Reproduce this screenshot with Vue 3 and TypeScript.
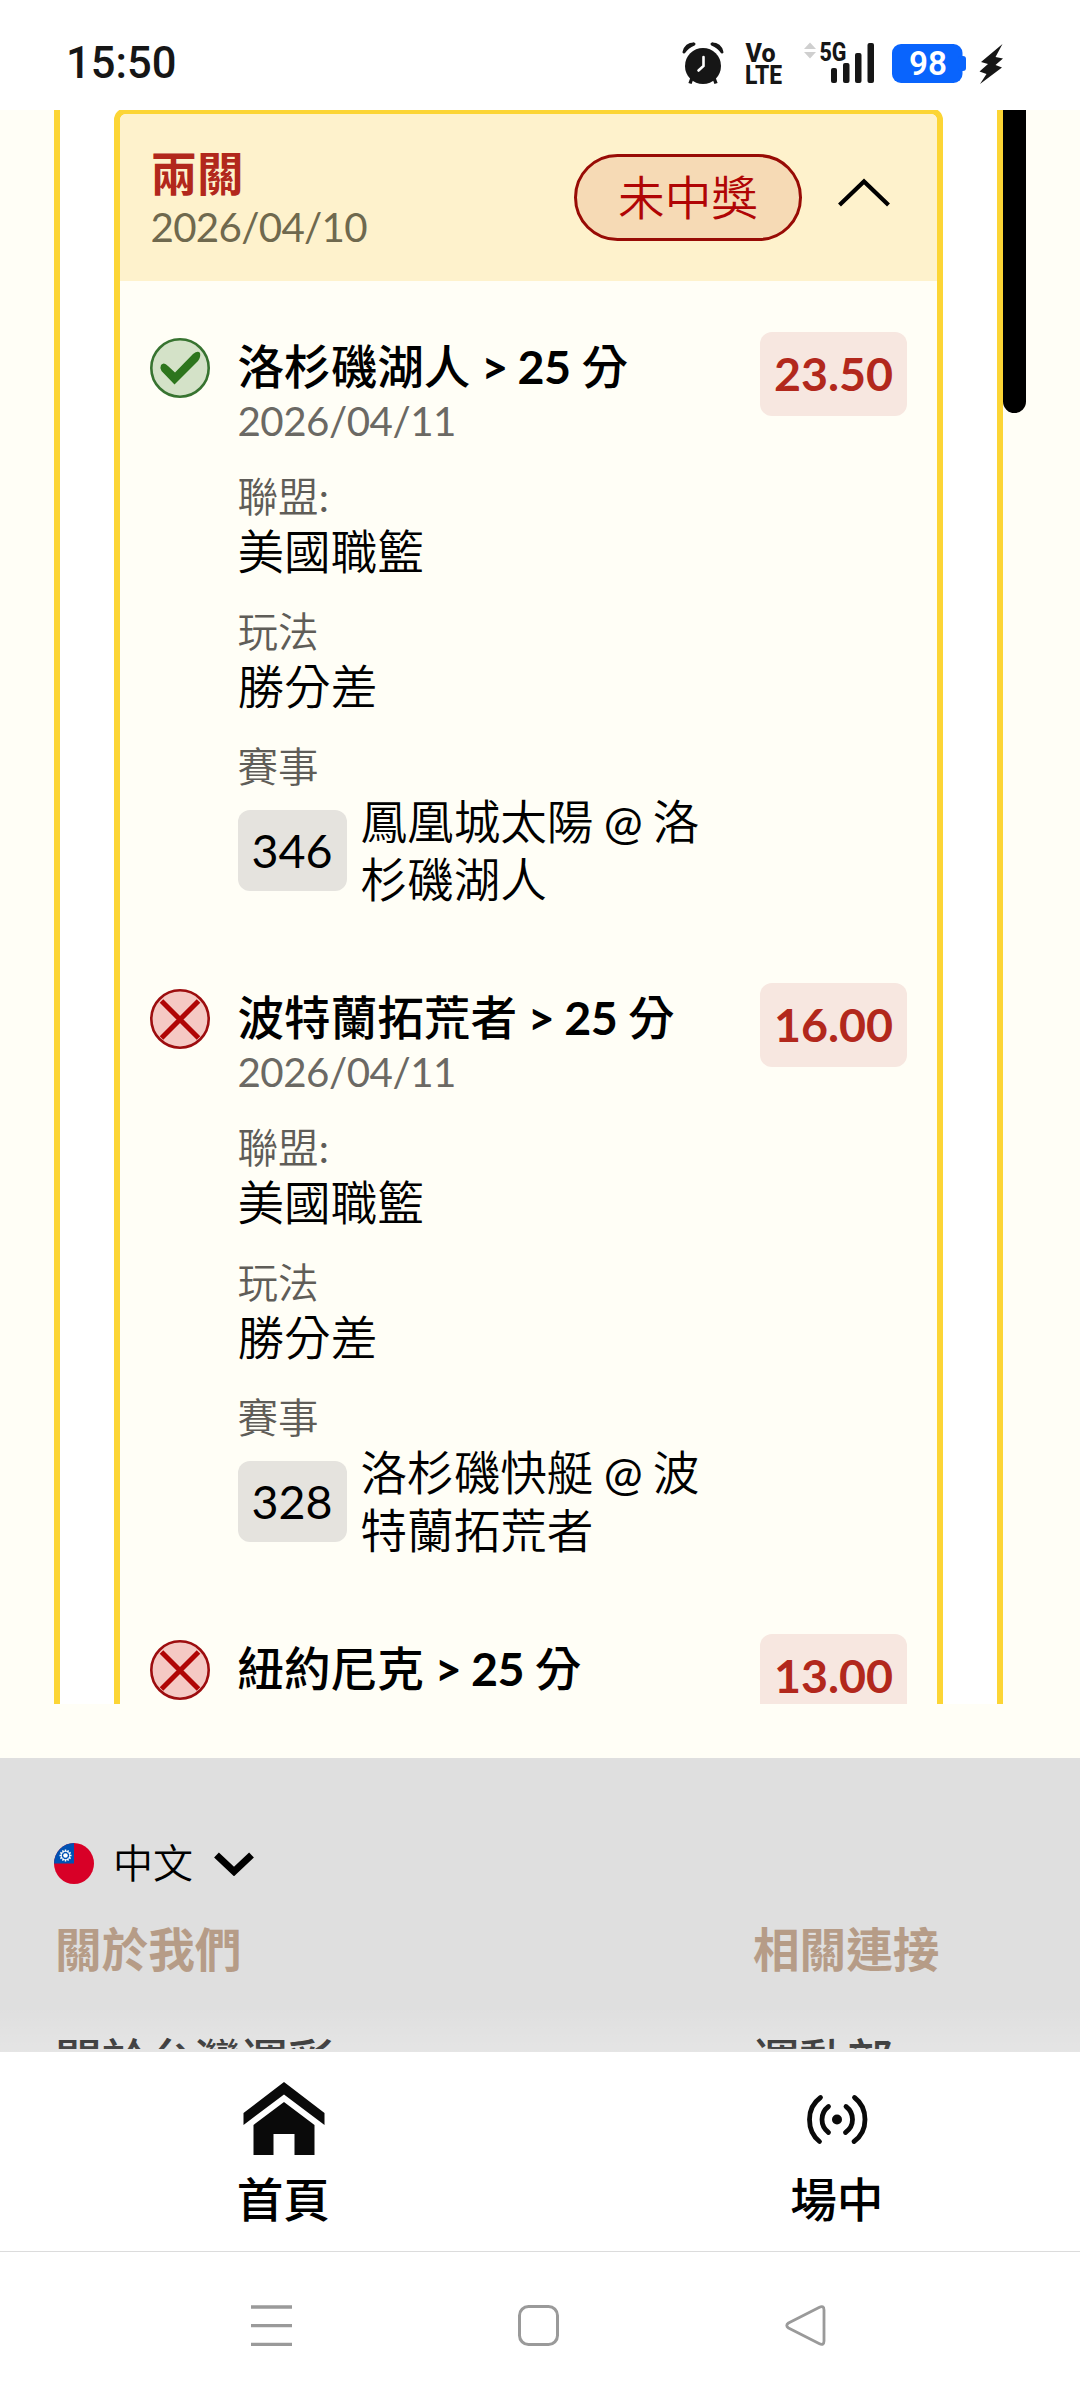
<script setup lang="ts">
interface Leg {
  won: boolean
  team: string
  margin: string
  date: string
  odds: string
  code: string
  away: string
  home: string
}

const legs: Leg[] = [
  { won: true, team: '洛杉磯湖人', margin: '> 25', date: '2026/04/11', odds: '23.50', code: '346', away: '鳳凰城太陽', home: '洛杉磯湖人' },
  { won: false, team: '波特蘭拓荒者', margin: '> 25', date: '2026/04/11', odds: '16.00', code: '328', away: '洛杉磯快艇', home: '波特蘭拓荒者' },
  { won: false, team: '紐約尼克', margin: '> 25', date: '', odds: '13.00', code: '', away: '', home: '' },
]

const sunRays: number[] = [0, 30, 60, 90, 120, 150, 180, 210, 240, 270, 300, 330]
</script>

<template>
  <div class="screen">
    <header class="status">
      <span class="clock">15:50</span>
      <svg class="status-icons" width="330" height="50" viewBox="680 40 330 50">
        <g fill="#161616">
          <circle cx="703" cy="66" r="18" />
          <path d="M684 52Q686 44 694 44Q687 47 684 52Z M722 52Q720 44 712 44Q719 47 722 52Z" stroke="#161616" stroke-width="3" stroke-linejoin="round" />
          <path d="M692 78L690 83.500M714 78L716 83.500" stroke="#161616" stroke-width="3.400" />
          <path d="M703.500 57V66L698.500 70.500" fill="none" stroke="#fff" stroke-width="2.600" stroke-linecap="round" />
          <text x="745.500" y="61.500" class="net" font-size="25" textLength="30" lengthAdjust="spacingAndGlyphs">Vo</text>
          <text x="745" y="83.500" class="net" font-size="25" textLength="37" lengthAdjust="spacingAndGlyphs">LTE</text>
          <text x="819.500" y="60.500" class="net" font-size="25" textLength="27" lengthAdjust="spacingAndGlyphs">5G</text>
          <rect x="831" y="68" width="6" height="15" rx="2" />
          <rect x="843" y="63" width="6.500" height="20" rx="2" />
          <rect x="855" y="53" width="6.500" height="30" rx="2" />
          <rect x="867.500" y="43" width="6.500" height="40" rx="2" />
          <path d="M1002.500 44L981 62L988 64L979.500 71.500L986.500 74L980 84L1002 67.500L995.500 65L1003 58.500L995.500 57Z" />
        </g>
        <path d="M804 49L810 42.500L816 49ZM804 52H816L810 58.500Z" fill="#cfcfcf" />
        <rect x="892" y="44" width="70.500" height="39" rx="9" fill="#0964fd" />
        <rect x="958" y="56" width="8" height="15" rx="3" fill="#0964fd" />
        <text x="909" y="75" font-family="Roboto, sans-serif" font-size="34" font-weight="600" fill="#fff" textLength="38" lengthAdjust="spacingAndGlyphs">98</text>
      </svg>
    </header>

    <main class="viewport">
      <div class="panel">
        <section class="ticket">
          <div class="ticket-head">
            <div class="head-text">
              <div class="combo">兩關</div>
              <div class="date olive">2026/04/10</div>
            </div>
            <span class="pill">未中獎</span>
            <svg class="chevron" width="52" height="30" viewBox="0 0 52 30">
              <path d="M1.500 27L26 3.500L50.500 27" fill="none" stroke="#000" stroke-width="4.200" />
            </svg>
          </div>

          <article v-for="leg in legs" :key="leg.team" class="leg">
            <svg class="mark" width="60" height="60" viewBox="0 0 60 60">
              <template v-if="leg.won">
                <circle cx="30" cy="30" r="28.700" fill="#d4e2c8" stroke="#377330" stroke-width="2.600" />
                <path d="M11 27Q14 23.500 18 28L25 34.500L43 16Q48 12 50 15Q51 19 48 23L24.500 46.500L11.500 33Q9.500 30 11 27Z" fill="#2d751d" />
              </template>
              <template v-else>
                <circle cx="30" cy="30" r="28.700" fill="#f5c9c4" stroke="#9d0d0f" stroke-width="2.600" />
                <path d="M11.500 12L48.500 49M48.500 12L11.500 49" stroke="#b00505" stroke-width="5" />
              </template>
            </svg>
            <div class="leg-body">
              <div class="leg-title">{{ leg.team }} <b>{{ leg.margin }}</b> 分</div>
              <template v-if="leg.code">
                <div class="date">{{ leg.date }}</div>
                <div class="label">聯盟<span class="latin">:</span></div>
                <div class="value">美國職籃</div>
                <div class="label">玩法</div>
                <div class="value">勝分差</div>
                <div class="label">賽事</div>
                <div class="match">
                  <span class="code">{{ leg.code }}</span>
                  <span class="teams">{{ leg.away }} <span class="latin">@</span> {{ leg.home }}</span>
                </div>
              </template>
            </div>
            <span class="odds">{{ leg.odds }}</span>
          </article>
        </section>
      </div>
      <div class="scrollbar"></div>
    </main>

    <footer class="footer">
      <div class="lang">
        <svg width="40" height="41" viewBox="0 0 40 41">
          <clipPath id="flag"><ellipse cx="20" cy="20.500" rx="20" ry="20.500" /></clipPath>
          <g clip-path="url(#flag)">
            <rect width="40" height="41" fill="#d80027" />
            <rect width="20" height="20.500" fill="#0052b4" />
            <g stroke="#fff" stroke-width="1.500">
              <line v-for="a in sunRays" :key="a" x1="11.500" y1="8.800" x2="11.500" y2="6.500" :transform="`rotate(${a} 11.500 12.500)`" />
            </g>
            <circle cx="11.500" cy="12.500" r="4.300" fill="none" stroke="#fff" stroke-width="0.800" />
            <circle cx="11.500" cy="12.500" r="2.300" fill="#fff" />
          </g>
        </svg>
        <span class="lang-name">中文</span>
        <svg width="40" height="24" viewBox="0 0 40 24">
          <path d="M2.500 3L20 19.500L37.500 3" fill="none" stroke="#000" stroke-width="7" />
        </svg>
      </div>
      <div class="columns">
        <div class="column">
          <div class="col-title">關於我們</div>
          <div class="col-link">關於台灣運彩</div>
        </div>
        <div class="column">
          <div class="col-title">相關連接</div>
          <div class="col-link">運動部</div>
        </div>
      </div>
      <div class="fade"></div>
    </footer>

    <nav class="tabs">
      <div class="tab">
        <svg width="82" height="80" viewBox="242.500 2080 82 80">
          <path d="M283.500 2082L324 2113V2125L283.500 2094.500L243 2125V2113Z" fill="#0a0a0a" />
          <path d="M283.500 2102L314 2125V2155H294V2134H273V2155H253V2125Z" fill="#0a0a0a" />
        </svg>
        <span>首頁</span>
      </div>
      <div class="tab">
        <svg width="82" height="80" viewBox="796.500 2080 82 80">
          <circle cx="837.500" cy="2119.500" r="5" fill="#0a0a0a" />
          <g fill="none" stroke="#0a0a0a" stroke-width="4.800" stroke-linecap="round">
            <path d="M829 2106.500Q822.500 2111.500 822.500 2119.500T829 2132.500" />
            <path d="M846.500 2106.500Q853 2111.500 853 2119.500T846 2132.500" />
            <path d="M821 2097.500Q810 2105.500 810 2119.500T820 2141.500" />
            <path d="M855 2097.500Q865.500 2105.500 865.500 2119.500T854.500 2141.500" />
          </g>
        </svg>
        <span>場中</span>
      </div>
    </nav>

    <div class="sysnav">
      <svg width="42" height="42" viewBox="0 0 42 42">
        <path d="M0 2H41M0 20.700H41M0 39.300H41" stroke="#9a9a9a" stroke-width="3.300" />
      </svg>
      <svg width="42" height="42" viewBox="0 0 42 42">
        <rect x="1.500" y="1.500" width="38" height="38" rx="9" fill="none" stroke="#9a9a9a" stroke-width="3" />
      </svg>
      <svg width="42" height="42" viewBox="0 0 42 42">
        <path d="M3.500 18L34 2.500Q39 0 39 5V36Q39 41 34 38.500L3.500 23Q0 20.500 3.500 18Z" fill="none" stroke="#9a9a9a" stroke-width="2.800" stroke-linejoin="round" />
      </svg>
    </div>
  </div>
</template>

<style>
body {
  background: #fff;
}
</style>

<style scoped>
.screen {
  width: 1080px;
  height: 2400px;
  overflow: hidden;
  display: flex;
  flex-direction: column;
  background: #fffef6;
  color: #000;
  font-family: Lato, "Noto Sans CJK TC", sans-serif;
  font-size: 46.6px;
  line-height: 58px;
}
svg {
  display: block;
  flex: none;
}
.status {
  height: 110px;
  flex: none;
  box-sizing: border-box;
  display: flex;
  justify-content: space-between;
  padding: 40px 70px 0 66px;
  background: #fff;
}
.clock {
  font-family: Roboto, sans-serif;
  font-size: 43.5px;
  font-weight: 500;
  line-height: 48px;
  color: #161616;
}
.net {
  font-family: Roboto, sans-serif;
  font-weight: 800;
}
.viewport {
  height: 1594px;
  flex: none;
  overflow: hidden;
  display: flex;
  align-items: flex-start;
  padding-left: 54px;
}
.panel {
  width: 937px;
  height: 1594px;
  border: solid #fcd535;
  border-width: 0 6px;
  background: #fff;
}
.ticket {
  margin: -2px 54px 0;
  border: 6px solid #fcd535;
  border-radius: 12px;
  background: #fffef6;
  overflow: hidden;
}
.ticket-head {
  height: 167px;
  box-sizing: border-box;
  display: flex;
  padding: 30px 47px 0 30.5px;
  background: #fef2cc;
}
.head-text {
  flex: 1;
}
.combo {
  font-weight: 700;
  color: #b2281c;
  height: 57px;
}
.date {
  font-size: 40.3px;
  line-height: 51px;
  color: #6b6964;
  letter-spacing: -0.5px;
}
.date.olive {
  color: #6f694e;
  letter-spacing: -0.7px;
}
.pill {
  width: 228px;
  height: 87px;
  margin-top: 10px;
  box-sizing: border-box;
  border: 3px solid #980b05;
  border-radius: 44px;
  background: #f6dab5;
  color: #b00505;
  font-weight: 350;
  text-align: center;
  line-height: 80px;
}
.chevron {
  margin: 34px 0 0 36px;
}
.leg {
  height: 600px;
  display: flex;
  align-items: flex-start;
  padding: 51px 30px 0;
}
.mark {
  margin-top: 6px;
}
.leg-body {
  width: 480px;
  margin: 5px 0 0 27.5px;
}
.leg-title {
  font-weight: 500;
  word-spacing: -1px;
}
.leg-title b {
  font-weight: 700;
  letter-spacing: -0.5px;
}
.value {
  font-weight: 350;
}
.label {
  margin-top: 27px;
  font-size: 40.6px;
  font-weight: 350;
  line-height: 50px;
  color: #5f5d58;
}
.date + .label {
  margin-top: 26px;
}
.latin {
  font-weight: 400;
}
.match {
  display: flex;
  align-items: center;
}
.code {
  width: 109px;
  height: 81px;
  flex: none;
  border-radius: 12px;
  background: #e5e3de;
  text-align: center;
  line-height: 81px;
}
.teams {
  width: 350px;
  margin-left: 14px;
  font-weight: 350;
  word-spacing: -2.5px;
}
.odds {
  width: 147px;
  height: 84px;
  margin-left: auto;
  border-radius: 12px;
  background: #f7e7e0;
  color: #b2281c;
  font-weight: 700;
  text-align: center;
  line-height: 83px;
}
.scrollbar {
  width: 23px;
  height: 303px;
  border-radius: 0 0 12px 12px;
  background: #000;
}
.footer {
  position: relative;
  height: 294px;
  flex: none;
  box-sizing: border-box;
  margin-top: 54px;
  padding: 80px 54px 0;
  background: #dfdfdf;
  overflow: hidden;
}
.lang {
  display: flex;
  align-items: center;
  height: 51px;
}
.lang-name {
  margin: 0 21px 0 19px;
  font-size: 40px;
  font-weight: 350;
  line-height: 51px;
}
.columns {
  height: 160px;
  overflow: hidden;
  display: flex;
}
.column {
  width: 698px;
  flex: none;
  padding-left: 1px;
  box-sizing: border-box;
}
.col-title {
  margin-top: 31px;
  font-weight: 700;
  color: #b69c87;
}
.col-link {
  margin-top: 53px;
  font-weight: 500;
  color: #222;
}
.fade {
  position: absolute;
  inset: auto 0 0;
  height: 46px;
  background: linear-gradient(rgba(255, 255, 255, 0), rgba(255, 255, 255, 0.18));
}
.tabs {
  height: 199px;
  flex: none;
  box-sizing: border-box;
  display: flex;
  padding-top: 28px;
  background: #fff;
}
.tab {
  width: 553.5px;
  flex: none;
  box-sizing: border-box;
  padding-left: 14px;
  display: flex;
  flex-direction: column;
  align-items: center;
  font-weight: 500;
}
.tab span {
  margin: 10px 1px 0 0;
}
.sysnav {
  height: 149px;
  box-sizing: border-box;
  display: flex;
  justify-content: space-between;
  padding: 53px 253px 0 251px;
  border-top: 1px solid #dcdcdc;
  background: #fff;
}
</style>
